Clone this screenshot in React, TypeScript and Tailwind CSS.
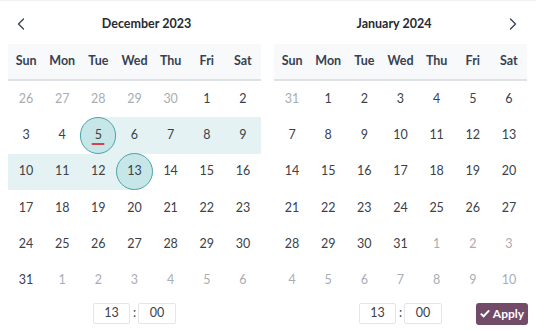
import React from "react";

type Day = { d: number; muted?: boolean };

const dec: Day[] = [
  ...[26, 27, 28, 29, 30].map((d) => ({ d, muted: true })),
  ...Array.from({ length: 31 }, (_, i) => ({ d: i + 1 })),
  ...[1, 2, 3, 4, 5, 6].map((d) => ({ d, muted: true })),
];
const jan: Day[] = [
  { d: 31, muted: true },
  ...Array.from({ length: 31 }, (_, i) => ({ d: i + 1 })),
  ...[1, 2, 3, 4, 5, 6, 7, 8, 9, 10].map((d) => ({ d, muted: true })),
];

const weekdays = ["Sun", "Mon", "Tue", "Wed", "Thu", "Fri", "Sat"];

function Chevron({ dir }: { dir: "left" | "right" }) {
  return (
    <svg width="8" height="12" viewBox="0 0 8 12" fill="none" stroke="#374151" strokeWidth="1.3" strokeLinecap="round" strokeLinejoin="round">
      {dir === "left" ? <polyline points="6.5,1 1.5,6 6.5,11" /> : <polyline points="1.5,1 6.5,6 1.5,11" />}
    </svg>
  );
}

function Cell({ day, month }: { day: Day; month: "dec" | "jan" }) {
  const inRange = month === "dec" && !day.muted && day.d >= 5 && day.d <= 13;
  const isEdge = month === "dec" && !day.muted && (day.d === 5 || day.d === 13);
  let bg = "";
  if (inRange) {
    if (day.d === 5) bg = "bg-[linear-gradient(to_right,transparent_50%,#e5f2f3_50%)]";
    else if (day.d === 13) bg = "bg-[linear-gradient(to_right,#e5f2f3_50%,transparent_50%)]";
    else bg = "bg-[#e5f2f3]";
  }
  return (
    <div className={`h-[36.3px] flex items-center justify-center ${bg}`}>
      {isEdge ? (
        <div className="relative w-[37px] h-[37px] rounded-full bg-[#c6e6e8] border border-[#4aa3a6] flex items-center justify-center text-[#3a414a]">
          {day.d}
          {day.d === 5 && <span className="absolute left-1/2 -translate-x-1/2 top-[25px] w-[13px] h-[2px] bg-[#d0434f] rounded" />}
        </div>
      ) : (
        <span className={day.muted ? "text-[#a8adb3]" : "text-[#3a414a]"}>{day.d}</span>
      )}
    </div>
  );
}

function Calendar({ title, days, month, nav }: { title: string; days: Day[]; month: "dec" | "jan"; nav: "left" | "right" }) {
  return (
    <div className="w-[253px]">
      <div className={`relative h-[27px] mt-[10px] flex items-center justify-center ${nav === "left" ? "pl-[24px]" : "pr-[13px]"}`}>
        {nav === "left" ? (
          <div className="absolute left-[9px] top-[7px]"><Chevron dir="left" /></div>
        ) : (
          <div className="absolute right-[10px] top-[7px]"><Chevron dir="right" /></div>
        )}
        <span className="font-bold text-[12.5px] text-[#262b33]">{title}</span>
      </div>
      <div className="mt-[6px] grid grid-cols-7 h-[37px] bg-[#f8f9fa] border-b-2 border-[#dee2e6] items-center">
        {weekdays.map((w) => (
          <div key={w} className="text-center font-bold text-[12.5px] text-[#374151]">{w}</div>
        ))}
      </div>
      <div className="grid grid-cols-7 text-[12.5px]">
        {days.map((d, i) => (
          <Cell key={i} day={d} month={month} />
        ))}
      </div>
    </div>
  );
}

function TimeInputs() {
  return (
    <div className="flex items-center gap-[3px] text-[12.5px] text-[#3a414a]">
      <div className="w-[37px] h-[21px] border border-[#e3e6ea] rounded-[2px] flex items-center justify-center">13</div>
      <span className="w-[2px] text-center">:</span>
      <div className="w-[38px] h-[21px] border border-[#e3e6ea] rounded-[2px] flex items-center justify-center">00</div>
    </div>
  );
}

export default function App() {
  return (
    <div className="w-[536px] h-[331px] bg-white border-t border-[#eef0f2] overflow-hidden" style={{ fontFamily: 'Lato, "Noto Sans", sans-serif' }}>
      <div className="flex gap-[13px] pl-[8px]">
        <Calendar title="December 2023" days={dec} month="dec" nav="left" />
        <Calendar title="January 2024" days={jan} month="jan" nav="right" />
      </div>
      <div className="flex gap-[13px] pl-[8px] mt-[4px]">
        <div className="w-[253px] flex justify-center">
          <TimeInputs />
        </div>
        <div className="w-[253px] grid grid-cols-[1fr_auto_1fr] items-center">
          <div />
          <TimeInputs />
          <div className="flex justify-end">
            <button className="h-[22px] w-[52px] justify-center rounded-[3px] bg-[#714b67] text-white text-[12px] font-bold flex items-center gap-[3px] -mr-[1px]">
              <svg width="10" height="9" viewBox="0 0 10 9"><path d="M0.8 4.6 L3.6 7.3 L9.2 1.4" stroke="white" strokeWidth="2" fill="none" /></svg>
              Apply
            </button>
          </div>
        </div>
      </div>
    </div>
  );
}
